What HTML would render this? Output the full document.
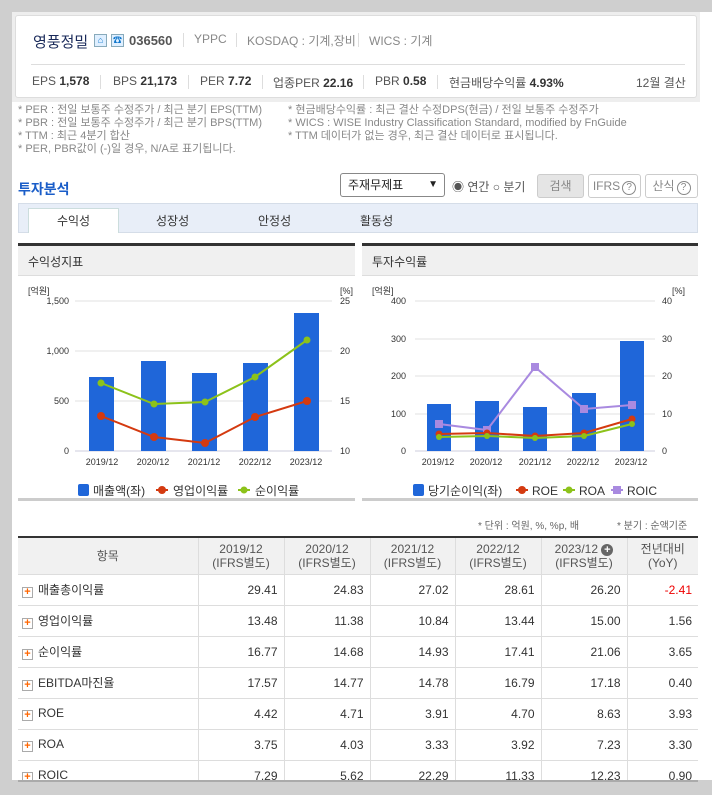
<!DOCTYPE html>
<html><head><meta charset="utf-8">
<style>
*{margin:0;padding:0;box-sizing:border-box}
body{width:712px;height:795px;background:#cfcfcf;font-family:"Liberation Sans","Noto Sans CJK KR",sans-serif;position:relative;overflow:hidden;color:#333}
.a{position:absolute;white-space:nowrap}
.wrap{position:absolute;left:12px;top:12px;width:700px;height:768px;background:#fff}
.hb{position:absolute;left:12px;top:12px;width:688px;height:90px;background:#eee}
.hbox{position:absolute;left:15px;top:15px;width:682px;height:83px;background:#fff;border:1px solid #ddd;border-radius:3px}
.note{font-size:11px;color:#888;line-height:13px}
.sep{position:absolute;width:1px;height:14px;background:#ddd}
.btn{position:absolute;height:24px;border:1px solid #ccc;border-radius:3px;font-size:12px;color:#888;text-align:center;line-height:22px;background:#fff}
.q{display:inline-block;width:14px;height:14px;border:1px solid #888;border-radius:50%;font-size:10px;line-height:12px;text-align:center;margin-left:2px}
table{position:absolute;left:18px;top:536px;border-collapse:collapse;font-size:12px;border-top:2px solid #333}
td,th{border:1px solid #ddd;border-top:0;height:31px;padding:0 6px;text-align:right;color:#333}
th{background:#f1f1f1;font-weight:normal;text-align:center;line-height:14px;height:37px;color:#555}
td:first-child{text-align:left;padding-left:4px;border-left:0}
th:first-child{border-left:0}
td:last-child,th:last-child{border-right:0}
.pl{display:inline-block;width:11px;height:11px;border:1px solid #aaa;color:#f60;font-size:11px;line-height:9px;text-align:center;font-weight:bold;margin-right:5px;vertical-align:-1px}
</style></head><body>
<div class="wrap"></div>
<div class="hb"></div>
<div class="hbox"></div>
<div class="a" style="left:33px;top:31px;font-size:15px;color:#1a2a5a">영풍정밀</div>
<div class="a" style="left:94px;top:34px;width:13px;height:13px;border:1px solid #8ab;background:#dfefff;font-size:9px;color:#17c;text-align:center;line-height:11px">⌂</div>
<div class="a" style="left:111px;top:34px;width:13px;height:13px;border:1px solid #8ab;background:#dfefff;font-size:9px;color:#17c;text-align:center;line-height:11px">☎</div>
<div class="a" style="left:129px;top:33px;font-size:13px;font-weight:bold;color:#555">036560</div>
<div class="sep" style="left:183px;top:33px"></div>
<div class="a" style="left:194px;top:32px;font-size:12px;color:#888">YPPC</div>
<div class="sep" style="left:236px;top:33px"></div>
<div class="a" style="left:247px;top:32px;font-size:12px;color:#888">KOSDAQ : 기계,장비</div>
<div class="sep" style="left:358px;top:33px"></div>
<div class="a" style="left:369px;top:32px;font-size:12px;color:#888">WICS : 기계</div>
<div class="a" style="left:31px;top:64px;width:654px;height:1px;background:#ddd"></div>
<div class="a" style="left:32px;top:74px;font-size:12px;color:#555">EPS <b style="color:#333">1,578</b></div>
<div class="sep" style="left:100px;top:75px"></div>
<div class="a" style="left:113px;top:74px;font-size:12px;color:#555">BPS <b style="color:#333">21,173</b></div>
<div class="sep" style="left:188px;top:75px"></div>
<div class="a" style="left:200px;top:74px;font-size:12px;color:#555">PER <b style="color:#333">7.72</b></div>
<div class="sep" style="left:262px;top:75px"></div>
<div class="a" style="left:273px;top:74px;font-size:12px;color:#555">업종PER <b style="color:#333">22.16</b></div>
<div class="sep" style="left:363px;top:75px"></div>
<div class="a" style="left:375px;top:74px;font-size:12px;color:#555">PBR <b style="color:#333">0.58</b></div>
<div class="sep" style="left:437px;top:75px"></div>
<div class="a" style="left:449px;top:74px;font-size:12px;color:#555">현금배당수익률 <b style="color:#333">4.93%</b></div>
<div class="a" style="left:636px;top:74px;font-size:12px;color:#555">12월 결산</div>

<div class="a note" style="left:18px;top:104px">* PER : 전일 보통주 수정주가 / 최근 분기 EPS(TTM)</div>
<div class="a note" style="left:18px;top:117px">* PBR : 전일 보통주 수정주가 / 최근 분기 BPS(TTM)</div>
<div class="a note" style="left:18px;top:130px">* TTM : 최근 4분기 합산</div>
<div class="a note" style="left:18px;top:143px">* PER, PBR값이 (-)일 경우, N/A로 표기됩니다.</div>
<div class="a note" style="left:288px;top:104px">* 현금배당수익률 : 최근 결산 수정DPS(현금) / 전일 보통주 수정주가</div>
<div class="a note" style="left:288px;top:117px">* WICS : WISE Industry Classification Standard, modified by FnGuide</div>
<div class="a note" style="left:288px;top:130px">* TTM 데이터가 없는 경우, 최근 결산 데이터로 표시됩니다.</div>

<div class="a" style="left:18px;top:179px;font-size:14px;font-weight:bold;color:#1a5dc8">투자분석</div>
<div class="a" style="left:340px;top:173px;width:105px;height:24px;border:1px solid #888;border-radius:3px;font-size:12px;line-height:22px;padding-left:7px;color:#222">주재무제표<span style="position:absolute;right:6px;font-size:10px">▼</span></div>
<div class="a" style="left:452px;top:178px;font-size:12px;color:#555">◉ 연간 ○ 분기</div>
<div class="btn" style="left:537px;top:174px;width:47px;background:#e5e5e5">검색</div>
<div class="btn" style="left:588px;top:174px;width:53px">IFRS<span class="q">?</span></div>
<div class="btn" style="left:645px;top:174px;width:53px">산식<span class="q">?</span></div>

<div class="a" style="left:18px;top:203px;width:680px;height:30px;background:#e8eef8;border:1px solid #d5dde8"></div>
<div class="a" style="left:28px;top:208px;width:91px;height:25px;background:#fff;border:1px solid #cdd;border-bottom:0;font-size:12px;text-align:center;line-height:24px">수익성</div>
<div class="a" style="left:156px;top:212px;font-size:12px">성장성</div>
<div class="a" style="left:258px;top:212px;font-size:12px">안정성</div>
<div class="a" style="left:360px;top:212px;font-size:12px">활동성</div>

<div class="a" style="left:18px;top:243px;width:337px;height:33px;background:#f0f0f0;border-top:3px solid #333;border-bottom:1px solid #ddd"></div>
<div class="a" style="left:28px;top:253px;font-size:12px">수익성지표</div>
<div class="a" style="left:18px;top:498px;width:337px;height:3px;background:#ccc"></div>
<div class="a" style="left:362px;top:243px;width:336px;height:33px;background:#f0f0f0;border-top:3px solid #333;border-bottom:1px solid #ddd"></div>
<div class="a" style="left:372px;top:253px;font-size:12px">투자수익률</div>
<div class="a" style="left:362px;top:498px;width:336px;height:3px;background:#ccc"></div>

<svg class="a" style="left:0;top:0" width="712" height="510" font-family="Liberation Sans, Noto Sans CJK KR, sans-serif" font-size="9" fill="#333">
<g stroke="#e0e0e0"><line x1="75" x2="332" y1="301" y2="301"/><line x1="75" x2="332" y1="351" y2="351"/><line x1="75" x2="332" y1="401" y2="401"/>
<line x1="415" x2="655" y1="301" y2="301"/><line x1="415" x2="655" y1="339" y2="339"/><line x1="415" x2="655" y1="376" y2="376"/><line x1="415" x2="655" y1="414" y2="414"/></g>
<g stroke="#ccd"><line x1="75" x2="332" y1="451" y2="451"/><line x1="415" x2="655" y1="451" y2="451"/></g>
<text x="28" y="294">[억원]</text><text x="340" y="294">[%]</text>
<g text-anchor="end"><text x="69" y="304">1,500</text><text x="69" y="354">1,000</text><text x="69" y="404">500</text><text x="69" y="454">0</text></g>
<text x="340" y="304">25</text><text x="340" y="354">20</text><text x="340" y="404">15</text><text x="340" y="454">10</text>
<g fill="#1f66d9"><rect x="89" y="377" width="25" height="74"/><rect x="141" y="361" width="25" height="90"/><rect x="192" y="373" width="25" height="78"/><rect x="243" y="363" width="25" height="88"/><rect x="294" y="313" width="25" height="138"/></g>
<polyline points="101,416 154,437 205,443 255,417 307,401" fill="none" stroke="#d43a10" stroke-width="2"/>
<g fill="#d43a10"><circle cx="101" cy="416" r="4"/><circle cx="154" cy="437" r="4"/><circle cx="205" cy="443" r="4"/><circle cx="255" cy="417" r="4"/><circle cx="307" cy="401" r="4"/></g>
<polyline points="101,383 154,404 205,402 255,377 307,340" fill="none" stroke="#8cc21a" stroke-width="2"/>
<g fill="#8cc21a"><circle cx="101" cy="383" r="3.5"/><circle cx="154" cy="404" r="3.5"/><circle cx="205" cy="402" r="3.5"/><circle cx="255" cy="377" r="3.5"/><circle cx="307" cy="340" r="3.5"/></g>
<g text-anchor="middle"><text x="102" y="465">2019/12</text><text x="153" y="465">2020/12</text><text x="204" y="465">2021/12</text><text x="255" y="465">2022/12</text><text x="306" y="465">2023/12</text>
<text x="438" y="465">2019/12</text><text x="486" y="465">2020/12</text><text x="535" y="465">2021/12</text><text x="583" y="465">2022/12</text><text x="631" y="465">2023/12</text></g>
<g font-size="12"><rect x="78" y="484" width="11" height="12" rx="2" fill="#1f66d9"/><text x="93" y="495">매출액(좌)</text>
<circle cx="162" cy="490" r="4" fill="#d43a10"/><line x1="156" x2="168" y1="490" y2="490" stroke="#d43a10" stroke-width="2"/><text x="173" y="495">영업이익률</text>
<line x1="238" x2="250" y1="490" y2="490" stroke="#8cc21a" stroke-width="2"/><circle cx="244" cy="490" r="3.5" fill="#8cc21a"/><text x="255" y="495">순이익률</text></g>

<text x="372" y="294">[억원]</text><text x="672" y="294">[%]</text>
<g text-anchor="end"><text x="406" y="304">400</text><text x="406" y="342">300</text><text x="406" y="379">200</text><text x="406" y="417">100</text><text x="406" y="454">0</text></g>
<text x="662" y="304">40</text><text x="662" y="342">30</text><text x="662" y="379">20</text><text x="662" y="417">10</text><text x="662" y="454">0</text>
<g fill="#1f66d9"><rect x="427" y="404" width="24" height="47"/><rect x="475" y="401" width="24" height="50"/><rect x="523" y="407" width="24" height="44"/><rect x="572" y="393" width="24" height="58"/><rect x="620" y="341" width="24" height="110"/></g>
<polyline points="439,424 487,430 535,367 584,409 632,405" fill="none" stroke="#a98ae0" stroke-width="2"/>
<g fill="#a98ae0"><rect x="435" y="420" width="8" height="8"/><rect x="483" y="426" width="8" height="8"/><rect x="531" y="363" width="8" height="8"/><rect x="580" y="405" width="8" height="8"/><rect x="628" y="401" width="8" height="8"/></g>
<polyline points="439,434 487,433 535,436 584,433 632,419" fill="none" stroke="#d43a10" stroke-width="2"/>
<g fill="#d43a10"><circle cx="439" cy="434" r="3.5"/><circle cx="487" cy="433" r="3.5"/><circle cx="535" cy="436" r="3.5"/><circle cx="584" cy="433" r="3.5"/><circle cx="632" cy="419" r="3.5"/></g>
<polyline points="439,437 487,436 535,438 584,436 632,424" fill="none" stroke="#8cc21a" stroke-width="2"/>
<g fill="#8cc21a"><circle cx="439" cy="437" r="3"/><circle cx="487" cy="436" r="3"/><circle cx="535" cy="438" r="3"/><circle cx="584" cy="436" r="3"/><circle cx="632" cy="424" r="3"/></g>
<g font-size="12"><rect x="413" y="484" width="11" height="12" rx="2" fill="#1f66d9"/><text x="428" y="495">당기순이익(좌)</text>
<line x1="516" x2="528" y1="490" y2="490" stroke="#d43a10" stroke-width="2"/><circle cx="522" cy="490" r="4" fill="#d43a10"/><text x="532" y="495">ROE</text>
<line x1="563" x2="575" y1="490" y2="490" stroke="#8cc21a" stroke-width="2"/><circle cx="569" cy="490" r="3.5" fill="#8cc21a"/><text x="579" y="495">ROA</text>
<line x1="611" x2="623" y1="490" y2="490" stroke="#a98ae0" stroke-width="2"/><rect x="613" y="486" width="8" height="8" fill="#a98ae0"/><text x="627" y="495">ROIC</text></g>
</svg>

<div class="a" style="left:478px;top:517px;font-size:10px;color:#666">* 단위 : 억원, %, %p, 배</div>
<div class="a" style="left:617px;top:517px;font-size:10px;color:#666">* 분기 : 순액기준</div>

<table>
<tr><th style="width:180px">항목</th><th style="width:86px">2019/12<br>(IFRS별도)</th><th style="width:86px">2020/12<br>(IFRS별도)</th><th style="width:85px">2021/12<br>(IFRS별도)</th><th style="width:86px">2022/12<br>(IFRS별도)</th><th style="width:86px">2023/12 <span style="display:inline-block;width:12px;height:12px;border-radius:50%;background:#666;color:#fff;font-size:11px;line-height:12px;font-weight:bold">+</span><br>(IFRS별도)</th><th style="width:71px">전년대비<br>(YoY)</th></tr>
<tr><td><span class="pl">+</span>매출총이익률</td><td>29.41</td><td>24.83</td><td>27.02</td><td>28.61</td><td>26.20</td><td style="color:#e00">-2.41</td></tr>
<tr><td><span class="pl">+</span>영업이익률</td><td>13.48</td><td>11.38</td><td>10.84</td><td>13.44</td><td>15.00</td><td>1.56</td></tr>
<tr><td><span class="pl">+</span>순이익률</td><td>16.77</td><td>14.68</td><td>14.93</td><td>17.41</td><td>21.06</td><td>3.65</td></tr>
<tr><td><span class="pl">+</span>EBITDA마진율</td><td>17.57</td><td>14.77</td><td>14.78</td><td>16.79</td><td>17.18</td><td>0.40</td></tr>
<tr><td><span class="pl">+</span>ROE</td><td>4.42</td><td>4.71</td><td>3.91</td><td>4.70</td><td>8.63</td><td>3.93</td></tr>
<tr><td><span class="pl">+</span>ROA</td><td>3.75</td><td>4.03</td><td>3.33</td><td>3.92</td><td>7.23</td><td>3.30</td></tr>
<tr><td><span class="pl">+</span>ROIC</td><td>7.29</td><td>5.62</td><td>22.29</td><td>11.33</td><td>12.23</td><td>0.90</td></tr>
</table>
<div class="a" style="left:0;top:781px;width:712px;height:14px;background:#cfcfcf"></div>
<div class="a" style="left:18px;top:780px;width:680px;height:2px;background:#aaa"></div>
</body></html>
